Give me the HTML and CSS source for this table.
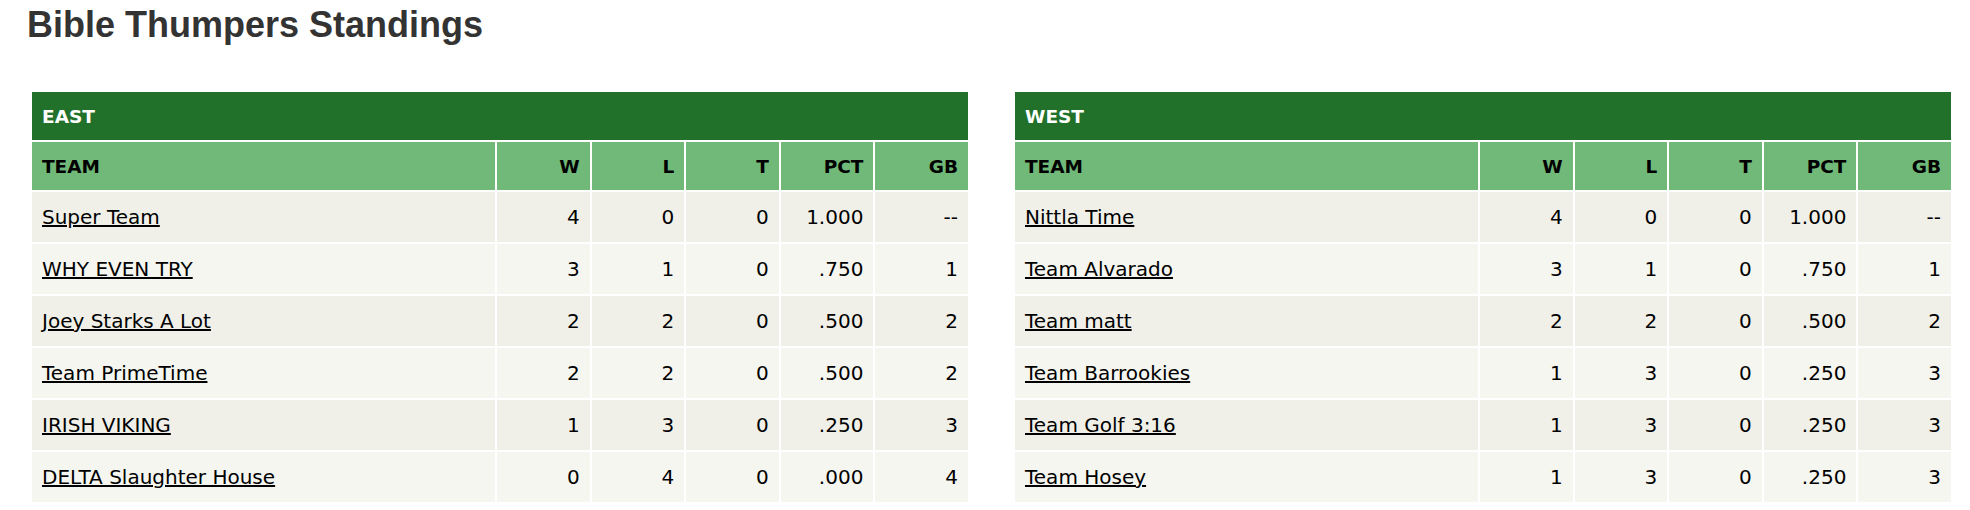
FILE: index.html
```html
<!DOCTYPE html>
<html lang="en">
<head>
<meta charset="utf-8">
<title>Bible Thumpers Standings</title>
<link rel="stylesheet" href="styles.css">
</head>
<body>
<div class="page">
  <h1 class="title">Bible Thumpers Standings</h1>
  <div class="divisions">
    <table class="standings">
      <colgroup>
        <col class="c-team"><col class="c-num"><col class="c-num"><col class="c-num"><col class="c-num"><col class="c-num">
      </colgroup>
      <thead>
        <tr class="div-row"><th colspan="6" class="div-name">EAST</th></tr>
        <tr class="col-row">
          <th class="left">TEAM</th><th>W</th><th>L</th><th>T</th><th>PCT</th><th>GB</th>
        </tr>
      </thead>
      <tbody>
        <tr><td class="left"><a href="#">Super Team</a></td><td>4</td><td>0</td><td>0</td><td>1.000</td><td>--</td></tr>
        <tr><td class="left"><a href="#">WHY EVEN TRY</a></td><td>3</td><td>1</td><td>0</td><td>.750</td><td>1</td></tr>
        <tr><td class="left"><a href="#">Joey Starks A Lot</a></td><td>2</td><td>2</td><td>0</td><td>.500</td><td>2</td></tr>
        <tr><td class="left"><a href="#">Team PrimeTime</a></td><td>2</td><td>2</td><td>0</td><td>.500</td><td>2</td></tr>
        <tr><td class="left"><a href="#">IRISH VIKING</a></td><td>1</td><td>3</td><td>0</td><td>.250</td><td>3</td></tr>
        <tr><td class="left"><a href="#">DELTA Slaughter House</a></td><td>0</td><td>4</td><td>0</td><td>.000</td><td>4</td></tr>
      </tbody>
    </table>
    <table class="standings">
      <colgroup>
        <col class="c-team"><col class="c-num"><col class="c-num"><col class="c-num"><col class="c-num"><col class="c-num">
      </colgroup>
      <thead>
        <tr class="div-row"><th colspan="6" class="div-name">WEST</th></tr>
        <tr class="col-row">
          <th class="left">TEAM</th><th>W</th><th>L</th><th>T</th><th>PCT</th><th>GB</th>
        </tr>
      </thead>
      <tbody>
        <tr><td class="left"><a href="#">Nittla Time</a></td><td>4</td><td>0</td><td>0</td><td>1.000</td><td>--</td></tr>
        <tr><td class="left"><a href="#">Team Alvarado</a></td><td>3</td><td>1</td><td>0</td><td>.750</td><td>1</td></tr>
        <tr><td class="left"><a href="#">Team matt</a></td><td>2</td><td>2</td><td>0</td><td>.500</td><td>2</td></tr>
        <tr><td class="left"><a href="#">Team Barrookies</a></td><td>1</td><td>3</td><td>0</td><td>.250</td><td>3</td></tr>
        <tr><td class="left"><a href="#">Team Golf 3:16</a></td><td>1</td><td>3</td><td>0</td><td>.250</td><td>3</td></tr>
        <tr><td class="left"><a href="#">Team Hosey</a></td><td>1</td><td>3</td><td>0</td><td>.250</td><td>3</td></tr>
      </tbody>
    </table>
  </div>
</div>
</body>
</html>
```

FILE: styles.css
```css
html, body {
  margin: 0;
  padding: 0;
  background: #ffffff;
}

.page {
  padding: 4px 17px 0 27px;
}

.title {
  margin: 0;
  font-family: "Liberation Sans", Arial, sans-serif;
  font-weight: bold;
  font-size: 36px;
  line-height: 42px;
  color: #333333;
}

.divisions {
  display: flex;
  gap: 43px;
  margin-top: 44px;
  padding-left: 3px;
}

.standings {
  width: 940px;
  flex: 0 0 940px;
  table-layout: fixed;
  border-collapse: separate;
  border-spacing: 2px;
  font-family: "DejaVu Sans", Verdana, sans-serif;
  color: #000000;
}

.c-team { width: 463px; }
.c-num { width: 92.6px; }

.standings th,
.standings td {
  padding: 0 10px;
  text-align: right;
  white-space: nowrap;
}

.standings .left {
  text-align: left;
}

.div-row th {
  height: 48px;
  background: #21712b;
  color: #ffffff;
  font-size: 18.5px;
  font-weight: bold;
  text-align: left;
}

.col-row th {
  height: 48px;
  background: #70b979;
  color: #000000;
  font-size: 18.5px;
  font-weight: bold;
}

.standings td {
  height: 50px;
  font-size: 20px;
  background: #f0f0e8;
}

.standings tbody tr:nth-child(even) td {
  background: #f6f6f0;
}

.standings a {
  color: #000000;
  text-decoration: underline;
}
```
